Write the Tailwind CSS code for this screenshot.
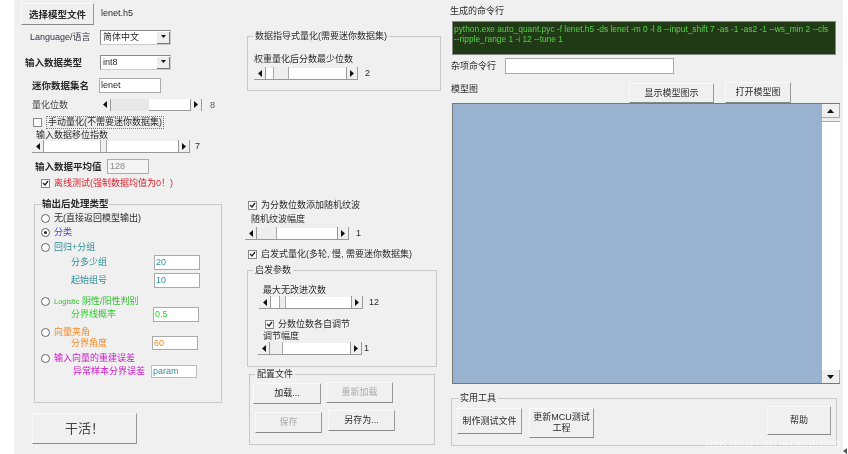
<!DOCTYPE html>
<html lang="en">
<head>
<meta charset="UTF-8" />
<title>NNCU</title>
<script src="https://cdn.jsdelivr.net/npm/@tailwindcss/browser@4"></script>
</head>
<body class="w-[848px] h-[454px] overflow-hidden bg-white font-['Liberation_Sans','Noto_Sans_CJK_SC',sans-serif] text-[9px] leading-[13px] text-[#2a2a2a] relative">
<div class="ml-[14px] w-[829px] h-[454px] bg-[#f0f0f0] flex blur-[0.3px]">

  <!-- left column -->
  <div class="w-[221px] shrink-0 pt-[3px] flex flex-col">
    <div class="flex items-center">
      <button class="ml-[7px] w-[73px] h-[22px] bg-[#f0f0f0] border border-[#fafafa] border-r-[#999] border-b-[#888] font-bold text-[9.500px]">选择模型文件</button>
      <span class="ml-[7px] -mt-[2px]">lenet.h5</span>
    </div>
    <div class="flex items-center mt-[5px] h-[15px]">
      <span class="ml-[16px] w-[70px] text-[#334]">Language/语言</span>
      <div class="w-[71px] h-[15px] bg-white border border-[#888] border-r-[#ccc] border-b-[#ccc] flex justify-between items-center pl-[2px]"><span>简体中文</span><span class="w-[13px] h-[12px] bg-[#eee] border-r border-b border-[#777] flex items-center justify-center"><svg width="7" height="4"><path d="M1 0h5L3.500 3z" fill="#111"/></svg></span></div>
    </div>
    <div class="flex items-center mt-[10px] h-[15px]">
      <span class="ml-[11px] w-[75px] font-bold text-[9.500px]">输入数据类型</span>
      <div class="w-[71px] h-[15px] bg-white border border-[#888] border-r-[#ccc] border-b-[#ccc] flex justify-between items-center pl-[2px]"><span>int8</span><span class="w-[13px] h-[12px] bg-[#eee] border-r border-b border-[#777] flex items-center justify-center"><svg width="7" height="4"><path d="M1 0h5L3.500 3z" fill="#111"/></svg></span></div>
    </div>
    <div class="flex items-center mt-[8px] h-[15px]">
      <span class="ml-[18px] w-[67px] font-bold text-[9.500px] whitespace-nowrap">迷你数据集名</span>
      <div class="w-[62px] h-[15px] bg-white border border-[#aaa] pl-[1px]">lenet</div>
    </div>
    <div class="flex items-center mt-[6px] h-[12px]">
      <span class="ml-[18px] w-[67px] text-[#444]">量化位数</span>
      <div class="w-[103px] h-[12px] bg-white flex items-center border-b border-[#999]"><span class="w-[12px] h-[12px] bg-[#f0f0f0] border-r border-[#999] flex items-center justify-center"><svg width="4" height="7"><path d="M4 0v7L0 3.500z" fill="#111"/></svg></span><span class="w-[38px] h-[12px] bg-[#e8e8e8]"></span><span class="flex-1"></span><span class="w-[12px] h-[12px] bg-[#f0f0f0] border-x border-[#999] flex items-center justify-center"><svg width="4" height="7"><path d="M0 0v7L4 3.500z" fill="#111"/></svg></span></div>
      <span class="ml-[8px] text-[#556]">8</span>
    </div>
    <div class="flex items-center mt-[5px] h-[13px]">
      <span class="ml-[19px] w-[9px] h-[9px] bg-white border border-[#888]"></span>
      <span class="ml-[4px] border border-dotted border-[#777] bg-[#ececec] px-[1px] leading-[11px]">手动量化(不需要迷你数据集)</span>
    </div>
    <div class="ml-[22px] leading-[12px]">输入数据移位指数</div>
    <div class="flex items-center -mt-[1px] h-[13px]">
      <div class="ml-[18px] w-[158px] h-[12px] bg-white flex items-center border-b border-[#999]"><span class="w-[12px] h-[12px] bg-[#f0f0f0] border-r border-[#999] flex items-center justify-center"><svg width="4" height="7"><path d="M4 0v7L0 3.500z" fill="#111"/></svg></span><span class="w-[56px]"></span><span class="w-[7px] h-[12px] bg-[#eee] border-x border-[#aaa]"></span><span class="flex-1"></span><span class="w-[12px] h-[12px] bg-[#f0f0f0] border-x border-[#999] flex items-center justify-center"><svg width="4" height="7"><path d="M0 0v7L4 3.500z" fill="#111"/></svg></span></div>
      <span class="ml-[5px]">7</span>
    </div>
    <div class="flex items-center mt-[6px] h-[15px]">
      <span class="ml-[21px] w-[72px] font-bold text-[9.500px] whitespace-nowrap">输入数据平均值</span>
      <div class="w-[42px] h-[15px] bg-[#f4f4f4] border border-[#aaa] pl-[2px] text-[#888]">128</div>
    </div>
    <div class="flex items-center mt-[3px] h-[13px]">
      <span class="ml-[27px] w-[9px] h-[9px] bg-white border border-[#888] flex items-center justify-center"><svg width="7" height="7"><path d="M1 3l2 2 3-4" fill="none" stroke="#222" stroke-width="1.300"/></svg></span>
      <span class="ml-[4px] text-[#d9232d]">离线测试(强制数据均值为0！)</span>
    </div>

    <!-- post processing group -->
    <fieldset class="ml-[20px] mt-[9px] w-[188px] h-[204px] border border-[#c8c8c8] px-[6px]">
      <legend class="font-bold text-[9.500px] ml-[1px] leading-[10px] px-0">输出后处理类型</legend>
      <div class="flex items-center h-[13px] mt-[3px]"><span class="w-[9px] h-[9px] rounded-full bg-white border border-[#666]"></span><span class="ml-[4px]">无(直接返回模型输出)</span></div>
      <div class="flex items-center h-[13px] mt-[1px]"><span class="w-[9px] h-[9px] rounded-full bg-white border border-[#666] flex items-center justify-center"><span class="w-[3px] h-[3px] rounded-full bg-[#222]"></span></span><span class="ml-[4px] text-[#4848d0]">分类</span></div>
      <div class="flex items-center h-[13px] mt-[2px]"><span class="w-[9px] h-[9px] rounded-full bg-white border border-[#666]"></span><span class="ml-[4px] text-[#30909a]">回归+分组</span></div>
      <div class="flex items-center h-[15px] mt-[1px] text-[#30909a]"><span class="ml-[30px] w-[83px]">分多少组</span><span class="w-[46px] h-[15px] bg-white border border-[#aaa] pl-[1px]">20</span></div>
      <div class="flex items-center h-[15px] mt-[3px] text-[#30909a]"><span class="ml-[30px] w-[83px]">起始组号</span><span class="w-[46px] h-[15px] bg-white border border-[#aaa] pl-[1px]">10</span></div>
      <div class="flex items-center h-[13px] mt-[7px]"><span class="w-[9px] h-[9px] rounded-full bg-white border border-[#666]"></span><span class="ml-[4px] text-[#2dc42d]"><span class="text-[7.500px]">Logistic</span> 阴性/阳性判别</span></div>
      <div class="flex items-center h-[15px] -mt-[1px] text-[#2dd12d]"><span class="ml-[30px] w-[82px]">分界线概率</span><span class="w-[46px] h-[15px] bg-white border border-[#aaa] pl-[1px]">0.5</span></div>
      <div class="flex items-center h-[13px] mt-[4px]"><span class="w-[9px] h-[9px] rounded-full bg-white border border-[#666]"></span><span class="ml-[4px] text-[#f08a24]">向量夹角</span></div>
      <div class="flex items-center h-[14px] -mt-[3px] text-[#f08a24]"><span class="ml-[30px] w-[81px]">分界角度</span><span class="w-[46px] h-[14px] bg-white border border-[#aaa] pl-[1px] leading-[12px]">60</span></div>
      <div class="flex items-center h-[13px] mt-[2px]"><span class="w-[9px] h-[9px] rounded-full bg-white border border-[#666]"></span><span class="ml-[4px] text-[#c81ec8]">输入向量的重建误差</span></div>
      <div class="flex items-center h-[13px] text-[#c81ec8]"><span class="ml-[32px] w-[78px] whitespace-nowrap">异常样本分界误差</span><span class="w-[46px] h-[13px] bg-white border border-[#bbb] pl-[1px] leading-[11px] text-[#30909a]">param</span></div>
    </fieldset>
    <button class="ml-[18px] mt-[10px] w-[105px] h-[31px] bg-[#f0f0f0] border border-[#fafafa] border-r-[#999] border-b-[#888] text-[13px] text-[#444]">干活！</button>
  </div>

  <!-- middle column -->
  <div class="w-[211px] shrink-0 flex flex-col">
    <fieldset class="mt-[30px] ml-[12px] w-[194px] h-[61px] border border-[#c8c8c8] px-[8px]">
      <legend class="leading-[12px] ml-[-3px] px-[2px]">数据指导式量化(需要迷你数据集)</legend>
      <div class="mt-[11px] ml-[-2px]">权重量化后分数最少位数</div>
      <div class="flex items-center mt-[1px] ml-[-2px] h-[13px]">
        <div class="w-[104px] h-[12px] bg-white flex items-center border-b border-[#999]"><span class="w-[12px] h-[12px] bg-[#f0f0f0] border-r border-[#999] flex items-center justify-center"><svg width="4" height="7"><path d="M4 0v7L0 3.500z" fill="#111"/></svg></span><span class="w-[7px]"></span><span class="w-[16px] h-[12px] bg-[#eee] border-x border-[#aaa]"></span><span class="flex-1"></span><span class="w-[12px] h-[12px] bg-[#f0f0f0] border-x border-[#999] flex items-center justify-center"><svg width="4" height="7"><path d="M0 0v7L4 3.500z" fill="#111"/></svg></span></div>
        <span class="ml-[7px]">2</span>
      </div>
    </fieldset>
    <div class="flex items-center mt-[108px] h-[13px]">
      <span class="ml-[13px] w-[9px] h-[9px] bg-white border border-[#888] flex items-center justify-center"><svg width="7" height="7"><path d="M1 3l2 2 3-4" fill="none" stroke="#222" stroke-width="1.300"/></svg></span>
      <span class="ml-[4px]">为分数位数添加随机纹波</span>
    </div>
    <div class="ml-[16px] mt-[1px]">随机纹波幅度</div>
    <div class="flex items-center mt-[1px] ml-[10px] h-[13px]">
      <div class="w-[104px] h-[12px] bg-white flex items-center border-b border-[#999]"><span class="w-[12px] h-[12px] bg-[#f0f0f0] border-r border-[#999] flex items-center justify-center"><svg width="4" height="7"><path d="M4 0v7L0 3.500z" fill="#111"/></svg></span><span class="w-[20px] h-[12px] bg-[#eee] border-r border-[#aaa]"></span><span class="flex-1"></span><span class="w-[12px] h-[12px] bg-[#f0f0f0] border-x border-[#999] flex items-center justify-center"><svg width="4" height="7"><path d="M0 0v7L4 3.500z" fill="#111"/></svg></span></div>
      <span class="ml-[7px]">1</span>
    </div>
    <div class="flex items-center mt-[8px] h-[13px]">
      <span class="ml-[13px] w-[9px] h-[9px] bg-white border border-[#888] flex items-center justify-center"><svg width="7" height="7"><path d="M1 3l2 2 3-4" fill="none" stroke="#222" stroke-width="1.300"/></svg></span>
      <span class="ml-[4px]">启发式量化(多轮, 慢, 需要迷你数据集)</span>
    </div>
    <fieldset class="mt-[3px] ml-[12px] w-[190px] h-[103px] border border-[#c8c8c8] px-[11px]">
      <legend class="leading-[12px] ml-[-6px] px-[2px]">启发参数</legend>
      <div class="mt-[8px] ml-[4px]">最大无改进次数</div>
      <div class="flex items-center -mt-[1px] h-[13px]">
        <div class="w-[104px] h-[12px] bg-white flex items-center border-b border-[#999]"><span class="w-[12px] h-[12px] bg-[#f0f0f0] border-r border-[#999] flex items-center justify-center"><svg width="4" height="7"><path d="M4 0v7L0 3.500z" fill="#111"/></svg></span><span class="w-[8px]"></span><span class="w-[7px] h-[12px] bg-[#eee] border-x border-[#aaa]"></span><span class="flex-1"></span><span class="w-[12px] h-[12px] bg-[#f0f0f0] border-x border-[#999] flex items-center justify-center"><svg width="4" height="7"><path d="M0 0v7L4 3.500z" fill="#111"/></svg></span></div>
        <span class="ml-[6px]">12</span>
      </div>
      <div class="flex items-center mt-[9px] h-[13px]">
        <span class="ml-[6px] w-[9px] h-[9px] bg-white border border-[#888] flex items-center justify-center"><svg width="7" height="7"><path d="M1 3l2 2 3-4" fill="none" stroke="#222" stroke-width="1.300"/></svg></span>
        <span class="ml-[4px]">分数位数各自调节</span>
      </div>
      <div class="ml-[4px] -mt-[1px]">调节幅度</div>
      <div class="flex items-center -mt-[1px] h-[13px] -ml-[1px]">
        <div class="w-[104px] h-[12px] bg-white flex items-center border-b border-[#999]"><span class="w-[12px] h-[12px] bg-[#f0f0f0] border-r border-[#999] flex items-center justify-center"><svg width="4" height="7"><path d="M4 0v7L0 3.500z" fill="#111"/></svg></span><span class="w-[13px] h-[12px] bg-[#eee] border-r border-[#aaa]"></span><span class="flex-1"></span><span class="w-[12px] h-[12px] bg-[#f0f0f0] border-x border-[#999] flex items-center justify-center"><svg width="4" height="7"><path d="M0 0v7L4 3.500z" fill="#111"/></svg></span></div>
        <span class="ml-[2px]">1</span>
      </div>
    </fieldset>
    <fieldset class="mt-[1px] ml-[14px] w-[186px] h-[77px] border border-[#c8c8c8] px-[3px]">
      <legend class="leading-[12px] ml-[2px] px-[2px]">配置文件</legend>
      <div class="flex gap-[5px] mt-[3px]">
        <button class="w-[68px] h-[21px] bg-[#f0f0f0] border border-[#fafafa] border-r-[#999] border-b-[#888]">加载...</button>
        <button class="w-[67px] h-[21px] -mt-[1px] bg-[#f0f0f0] border border-[#fafafa] border-r-[#999] border-b-[#888] text-[#aaa]">重新加载</button>
      </div>
      <div class="flex gap-[6px] mt-[8px] ml-[2px]">
        <button class="w-[67px] h-[21px] bg-[#f0f0f0] border border-[#fafafa] border-r-[#999] border-b-[#888] text-[#aaa]">保存</button>
        <button class="w-[67px] h-[21px] -mt-[2px] bg-[#f0f0f0] border border-[#fafafa] border-r-[#999] border-b-[#888]">另存为...</button>
      </div>
    </fieldset>
  </div>

  <!-- right column -->
  <div class="flex-1 flex flex-col pl-[5px]">
    <div class="mt-[5px] -ml-[1px]">生成的命令行</div>
    <div class="mt-[3px] ml-[1px] w-[384px] h-[34px] bg-[#213a16] border border-[#888] text-[#56d24a] text-[8.400px] leading-[10px] pl-[1px] pt-[2px] whitespace-nowrap overflow-hidden">python.exe auto_quant.pyc -f lenet.h5 -ds lenet -m 0 -l 8 --input_shift 7 -as -1 -as2 -1 --ws_min 2 --cls<br>--ripple_range 1 -i 12 --tune 1</div>
    <div class="flex items-center mt-[3px] h-[16px]">
      <span class="w-[54px]">杂项命令行</span>
      <div class="w-[169px] h-[16px] bg-white border border-[#aaa]"></div>
    </div>
    <div class="flex items-end h-[21px] mt-[8px]">
      <span class="w-[178px] mb-[7px]">模型图</span>
      <button class="w-[85px] h-[20px] bg-[#f0f0f0] border border-[#fafafa] border-r-[#999] border-b-[#888]">显示模型图示</button>
      <button class="ml-[11px] w-[66px] h-[21px] bg-[#f0f0f0] border border-[#fafafa] border-r-[#999] border-b-[#888]">打开模型图</button>
    </div>
    <div class="h-[281px] w-[388px] ml-[1px] flex border-l border-t border-b border-[#777] bg-[#98b2d0]">
      <div class="flex-1"></div>
      <div class="w-[18px] bg-white flex flex-col justify-between">
        <div><div class="h-[13px] bg-[#f0f0f0] border-r border-[#aaa] flex items-center justify-center"><svg width="7" height="4"><path d="M0 4h7L3.500 0z" fill="#111"/></svg></div><div class="h-[5px] bg-[#eee] border-y border-[#aaa]"></div></div>
        <div class="h-[13px] bg-[#f0f0f0] border-r border-[#aaa] flex items-center justify-center"><svg width="7" height="4"><path d="M0 0h7L3.500 4z" fill="#111"/></svg></div>
      </div>
    </div>
    <fieldset class="mt-[8px] w-[386px] h-[54px] border border-[#c8c8c8] px-[5px]">
      <legend class="leading-[12px] ml-[1px] px-[2px]">实用工具</legend>
      <div class="flex items-start">
        <button class="w-[65px] h-[26px] mt-[4px] bg-[#f0f0f0] border border-[#fafafa] border-r-[#999] border-b-[#888]">制作测试文件</button>
        <button class="ml-[7px] w-[65px] h-[30px] mt-[4px] bg-[#f0f0f0] border border-[#fafafa] border-r-[#999] border-b-[#888] leading-[11px]">更新MCU测试<br>工程</button>
        <button class="ml-auto w-[64px] h-[29px] mt-[2px] bg-[#f0f0f0] border border-[#fafafa] border-r-[#999] border-b-[#888]">帮助</button>
      </div>
    </fieldset>
  </div>
</div>
<!-- csdn watermark over the corner -->
<span class="absolute left-[705px] top-[437px] text-[9.800px] text-white/70 whitespace-nowrap">https://blog.csdn.net/xiuyu1860</span>
<svg class="absolute left-[843px] top-[448px]" width="5" height="6"><path d="M4 0v6L0 3z" fill="#555"/></svg>
</body>
</html>
